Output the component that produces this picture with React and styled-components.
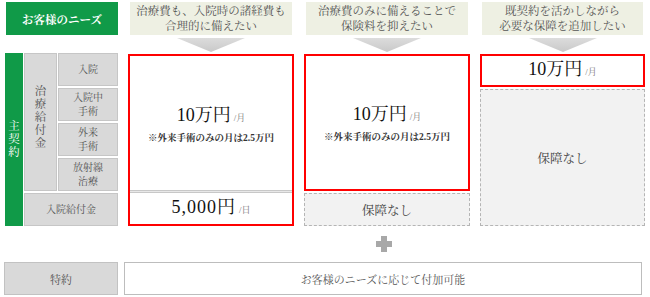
import React from "react";
import styled, { createGlobalStyle } from "styled-components";

const GlobalStyle = createGlobalStyle`
  html, body {
    margin: 0;
    padding: 0;
    background: #fff;
  }
  body {
    font-family: "Liberation Serif", "Noto Serif CJK JP", "Noto Sans CJK JP", serif;
    color: #333;
  }
  * { box-sizing: border-box; }
`;

const Page = styled.div`
  width: 650px;
  height: 297px;
  padding: 2px 8px 0 5px;
  display: flex;
  flex-direction: column;
`;

// 4 columns shared by the header, arrow and plan rows
const Row = styled.div`
  display: grid;
  grid-template-columns: 113px 166px 166px 165px;
  column-gap: 10px;
  height: ${(p) => p.$h}px;
  margin-top: ${(p) => p.$mt || 0}px;
`;

const NeedsLabel = styled.div`
  background: #109a48;
  color: #fff;
  font-weight: bold;
  font-size: 11.5px;
  display: flex;
  align-items: center;
  justify-content: center;
  margin-left: 1px;
`;

const NeedBox = styled.div`
  background: #eef0e3;
  color: #555;
  font-size: 11.5px;
  line-height: 15px;
  text-align: center;
  display: flex;
  align-items: center;
  justify-content: center;
  margin: 0 2px;
`;

const ArrowCell = styled.div`
  display: flex;
  justify-content: center;
`;

const Arrow = () => (
  <svg width="68" height="14" viewBox="0 0 68 14">
    <defs>
      <linearGradient id="arrowFill" x1="0" y1="0" x2="0" y2="1">
        <stop offset="0" stopColor="#dcdcdc" />
        <stop offset="1" stopColor="#c9c9c9" />
      </linearGradient>
    </defs>
    <polygon points="0,0 68,0 34,14" fill="url(#arrowFill)" />
  </svg>
);

/* left side labels */
const LabelGrid = styled.div`
  display: grid;
  grid-template-columns: 18px 33px 60px;
  grid-template-rows: repeat(5, 1fr);
  column-gap: 1px;
  row-gap: 2px;
  margin-top: -1px;
`;

const MainLabel = styled.div`
  grid-row: 1 / span 5;
  background: #109a48;
  color: #fff;
  font-size: 11.5px;
  display: flex;
  align-items: center;
  justify-content: center;
`;

// one character per line, read top to bottom
const Stack = styled.div`
  display: flex;
  flex-direction: column;
  align-items: center;
  line-height: 13px;
`;

const Vertical = ({ text }) => (
  <Stack>
    {Array.from(text).map((ch, i) => (
      <span key={i}>{ch}</span>
    ))}
  </Stack>
);

const Cell = styled.div`
  background: #d9d9d9;
  border: 1px solid #c6c6c6;
  color: #555;
  font-size: ${(p) => (p.$tall ? 11.5 : 10)}px;
  line-height: 14px;
  text-align: center;
  display: flex;
  align-items: center;
  justify-content: center;
  ${(p) => p.$tall && "grid-row: 1 / span 4; padding-bottom: 10px;"}
  ${(p) => p.$wide && "grid-column: 2 / span 2;"}
`;

/* plan columns */
const PlanColumn = styled.div`
  display: flex;
  flex-direction: column;
  gap: 2px;
`;

const RedFrame = styled.div`
  border: 2px solid #f00;
  background: #fff;
  display: flex;
  flex-direction: column;
  ${(p) => (p.$h ? `height: ${p.$h}px; flex: none;` : "flex: 1;")}
`;

const Upper = styled.div`
  flex: 1;
  display: flex;
  flex-direction: column;
  align-items: center;
  justify-content: center;
  padding-top: 2px;
`;

const Divider = styled.div`
  height: 3px;
  border-top: 1px solid #c8c8c8;
  border-bottom: 1px solid #c8c8c8;
  background: #e8e8e8;
`;

const Lower = styled.div`
  height: ${(p) => p.$h || 31}px;
  display: flex;
  align-items: center;
  justify-content: center;
`;

const Amount = styled.div`
  font-size: 18px;
  color: #111;
  line-height: 20px;
  letter-spacing: ${(p) => (p.$spaced ? 1 : 0)}px;
`;

const Unit = styled.span`
  font-size: 9px;
  color: #777;
  margin-left: 3px;
  letter-spacing: 0;
`;

const Note = styled.div`
  font-size: 9.5px;
  font-weight: bold;
  color: #333;
  margin-top: 2px;
`;

const NoCover = styled.div`
  background: #f2f2f2;
  border: 1px dashed #b5b5b5;
  color: #444;
  font-size: 12.5px;
  display: flex;
  align-items: center;
  justify-content: center;
  ${(p) => (p.$h ? `height: ${p.$h}px; flex: none;` : "flex: 1;")}
`;

const PlusRow = styled.div`
  height: 36px;
  display: flex;
  align-items: center;
  padding-left: 371px;
`;

const Plus = () => (
  <svg width="16" height="16" viewBox="0 0 16 16">
    <rect x="5" y="0" width="6" height="16" fill="#a8a8a8" />
    <rect x="0" y="5" width="16" height="6" fill="#a8a8a8" />
  </svg>
);

const RiderRow = styled.div`
  display: grid;
  grid-template-columns: 114px 1fr;
  column-gap: 6px;
  height: 33px;
  margin-left: -1px;
`;

const RiderLabel = styled.div`
  background: #d9d9d9;
  border: 1px solid #c2c2c2;
  color: #555;
  font-size: 11px;
  display: flex;
  align-items: center;
  justify-content: center;
`;

const RiderBox = styled.div`
  background: #fff;
  border: 1px solid #bdbdbd;
  color: #555;
  font-size: 11px;
  display: flex;
  align-items: center;
  justify-content: center;
`;

const needs = [
  ["治療費も、入院時の諸経費も", "合理的に備えたい"],
  ["治療費のみに備えることで", "保険料を抑えたい"],
  ["既契約を活かしながら", "必要な保障を追加したい"],
];

const MonthlyBlock = () => (
  <>
    <Amount>
      10万円<Unit>/月</Unit>
    </Amount>
    <Note>※外来手術のみの月は2.5万円</Note>
  </>
);

export default function App() {
  return (
    <>
      <GlobalStyle />
      <Page>
        <Row $h={33}>
          <NeedsLabel>お客様のニーズ</NeedsLabel>
          {needs.map((lines) => (
            <NeedBox key={lines[0]}>
              {lines[0]}
              <br />
              {lines[1]}
            </NeedBox>
          ))}
        </Row>

        <Row $h={14} $mt={3}>
          <div />
          {needs.map((lines) => (
            <ArrowCell key={lines[0]}>
              <Arrow />
            </ArrowCell>
          ))}
        </Row>

        <Row $h={172} $mt={2}>
          <LabelGrid>
            <MainLabel>
              <Vertical text="主契約" />
            </MainLabel>
            <Cell $tall>
              <Vertical text="治療給付金" />
            </Cell>
            <Cell>入院</Cell>
            <Cell>
              入院中
              <br />
              手術
            </Cell>
            <Cell>
              外来
              <br />
              手術
            </Cell>
            <Cell>
              放射線
              <br />
              治療
            </Cell>
            <Cell $wide>入院給付金</Cell>
          </LabelGrid>

          <PlanColumn>
            <RedFrame>
              <Upper>
                <MonthlyBlock />
              </Upper>
              <Divider />
              <Lower>
                <Amount $spaced>
                  5,000円<Unit>/日</Unit>
                </Amount>
              </Lower>
            </RedFrame>
          </PlanColumn>

          <PlanColumn>
            <RedFrame>
              <Upper>
                <MonthlyBlock />
              </Upper>
            </RedFrame>
            <NoCover $h={33}>保障なし</NoCover>
          </PlanColumn>

          <PlanColumn>
            <RedFrame $h={33}>
              <Lower $h={29}>
                <Amount>
                  10万円<Unit>/月</Unit>
                </Amount>
              </Lower>
            </RedFrame>
            <NoCover>保障なし</NoCover>
          </PlanColumn>
        </Row>

        <PlusRow>
          <Plus />
        </PlusRow>

        <RiderRow>
          <RiderLabel>特約</RiderLabel>
          <RiderBox>お客様のニーズに応じて付加可能</RiderBox>
        </RiderRow>
      </Page>
    </>
  );
}
